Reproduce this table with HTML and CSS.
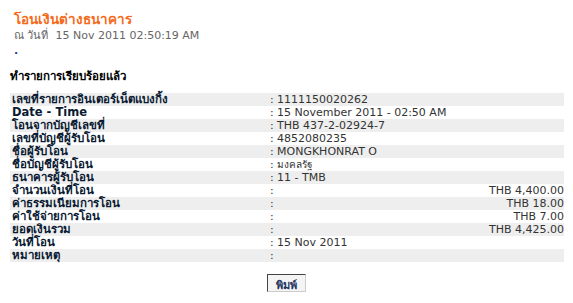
FILE: index.html
```html
<!DOCTYPE html>
<html lang="th">
<head>
    <meta charset="UTF-8">
    <title>โอนเงินต่างธนาคาร</title>
    <link rel="stylesheet" href="styles.css">
</head>
<body>
    <div class="head">
        <h1 class="title">โอนเงินต่างธนาคาร</h1>
        <p class="stamp">ณ วันที่ &nbsp;15 Nov 2011 02:50:19 AM</p>
        <p class="dot">.</p>
    </div>

    <p class="done">ทำรายการเรียบร้อยแล้ว</p>

    <table class="receipt">
        <tr><th>เลขที่รายการอินเตอร์เน็ตแบงกิ้ง</th><td class="sep">:</td><td>1111150020262</td></tr>
        <tr><th class="big">Date - Time</th><td class="sep">:</td><td>15 November 2011 - 02:50 AM</td></tr>
        <tr><th>โอนจากบัญชีเลขที่</th><td class="sep">:</td><td>THB 437-2-02924-7</td></tr>
        <tr><th>เลขที่บัญชีผู้รับโอน</th><td class="sep">:</td><td>4852080235</td></tr>
        <tr><th>ชื่อผู้รับโอน</th><td class="sep">:</td><td>MONGKHONRAT O</td></tr>
        <tr><th>ชื่อบัญชีผู้รับโอน</th><td class="sep">:</td><td class="thai">มงคลรัฐ</td></tr>
        <tr><th>ธนาคารผู้รับโอน</th><td class="sep">:</td><td>11 - TMB</td></tr>
        <tr><th>จำนวนเงินที่โอน</th><td class="sep">:</td><td class="amt">THB 4,400.00</td></tr>
        <tr><th>ค่าธรรมเนียมการโอน</th><td class="sep">:</td><td class="amt">THB 18.00</td></tr>
        <tr><th>ค่าใช้จ่ายการโอน</th><td class="sep">:</td><td class="amt">THB 7.00</td></tr>
        <tr><th>ยอดเงินรวม</th><td class="sep">:</td><td class="amt">THB 4,425.00</td></tr>
        <tr><th>วันที่โอน</th><td class="sep">:</td><td>15 Nov 2011</td></tr>
        <tr><th>หมายเหตุ</th><td class="sep">:</td><td></td></tr>
    </table>

    <div class="actions">
        <button type="button" onclick="window.print()">พิมพ์</button>
    </div>
</body>
</html>
```

FILE: styles.css
```css
body {
    margin: 0;
    padding: 8px 10px;
    font-family: Tahoma, "DejaVu Sans", sans-serif;
    font-size: 11px;
    color: #000;
    background: #fff;
}
.head { padding-left: 4px; }
.title {
    margin: 3px 0 0;
    font-size: 13.5px;
    font-weight: bold;
    color: #f56a1a;
    line-height: 16px;
}
.stamp {
    margin: 1px 0 0;
    font-family: Verdana, "DejaVu Sans", sans-serif;
    font-size: 11px;
    color: #666;
    line-height: 16px;
}
.dot {
    margin: 0;
    color: #1f3f8a;
    font-weight: bold;
    line-height: 14px;
}
.done {
    margin: 11px 0 10px;
    font-weight: bold;
    font-size: 11.5px;
    line-height: 14px;
}
.receipt {
    width: 554px;
    border-collapse: collapse;
}
.receipt tr:nth-child(odd) { background: #eeeeee; }
.receipt th, .receipt td {
    padding: 0 2px;
    height: 13px;
    line-height: 13px;
    vertical-align: middle;
}
.receipt th {
    width: 254px;
    text-align: left;
    font-weight: bold;
    color: #0a1a33;
    font-size: 11.5px;
}
.receipt th.big {
    font-family: Verdana, "DejaVu Sans", sans-serif;
    font-size: 11.5px;
}
.receipt td {
    font-family: Verdana, "DejaVu Sans", sans-serif;
    font-size: 11px;
    color: #333;
}
.receipt td.sep { width: 4px; padding-right: 1px; }
.receipt td.thai { font-family: Tahoma, sans-serif; font-size: 10px; }
.receipt td.amt { text-align: right; padding-right: 0; }
.actions {
    text-align: center;
    padding-top: 12px;
}
.actions button {
    font-family: Tahoma, sans-serif;
    font-size: 11px;
    font-weight: bold;
    color: #1f3560;
    background: #f4f4f4;
    border: 1px solid #ccc;
    border-top-color: #444;
    border-left-color: #444;
    padding: 1px 8px;
    height: 18px;
}
```
